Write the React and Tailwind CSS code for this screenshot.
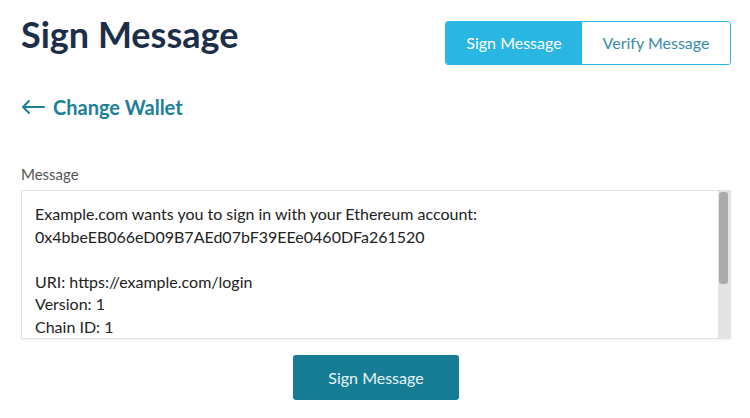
import { useState } from "react";

const LINES = [
  "Example.com wants you to sign in with your Ethereum account:",
  "0x4bbeEB066eD09B7AEd07bF39EEe0460DFa261520",
  "",
  "URI: https://example.com/login",
  "Version: 1",
  "Chain ID: 1",
];

export default function App() {
  const [tab, setTab] = useState("sign");

  return (
    <div className="w-[750px] h-[418px] bg-white pl-[21px] pr-[19px] pt-[10px] font-['Lato','Liberation_Sans',sans-serif] overflow-hidden">
      {/* Header */}
      <div className="flex items-start justify-between">
        <h1 className="text-[36px] leading-[48px] font-bold text-[#1c2e4a]">Sign Message</h1>
        <div className="mt-[11px] flex h-[44px] rounded-[3px] border border-[#29b6e3] overflow-hidden">
          <button
            onClick={() => setTab("sign")}
            className={`w-[136px] text-[16px] ${tab === "sign" ? "bg-[#29b6e3] text-white" : "bg-white text-[#3a8ca6]"}`}
          >
            Sign Message
          </button>
          <button
            onClick={() => setTab("verify")}
            className={`w-[148px] text-[16px] ${tab === "verify" ? "bg-[#29b6e3] text-white" : "bg-white text-[#3a8ca6]"}`}
          >
            Verify Message
          </button>
        </div>
      </div>

      {/* Back link */}
      <button className="mt-[30px] flex items-center gap-[8px] text-[#1b8098] font-bold text-[20px] leading-[24px]">
        <svg width="24" height="16" viewBox="0 0 24 16" fill="none" stroke="currentColor" strokeWidth="2" strokeLinecap="round" strokeLinejoin="round">
          <path d="M23 8H2M8 2L2 8l6 6" />
        </svg>
        Change Wallet
      </button>

      {/* Message */}
      <label className="mt-[45px] block text-[15px] leading-[20px] text-[#555]">Message</label>
      <div className="mt-[6px] flex w-[710px] h-[149px] border border-[#e2e2e2] shadow-[0_1px_2px_rgba(0,0,0,0.06)]">
        <div className="flex-1 overflow-hidden px-[13px] pt-[12px] text-[16px] leading-[22.5px] text-[#222] whitespace-pre">
          {LINES.map((l, i) => (
            <div key={i} className="h-[22.5px]">{l}</div>
          ))}
        </div>
        {/* scrollbar */}
        <div className="w-[12px] py-[1px] pr-[1px] flex flex-col bg-[#e4e4e4]">
          <div className="h-[92px] mx-[1px] rounded-[3px] bg-[#acacac]" />
        </div>
      </div>

      <div className="mt-[16px] flex justify-center">
        <button className="w-[166px] h-[45px] rounded-[3px] bg-[#177d95] text-[16px] text-[#e6f6f9]">
          Sign Message
        </button>
      </div>
    </div>
  );
}
